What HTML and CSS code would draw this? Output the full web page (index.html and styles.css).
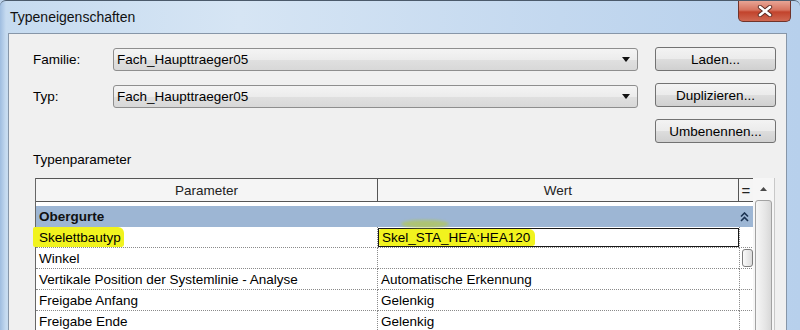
FILE: index.html
```html
<!DOCTYPE html>
<html lang="de">

<head>
    <meta charset="UTF-8">
    <meta name="viewport" content="width=device-width, initial-scale=1.0">
    <link rel="stylesheet" href="styles.css">
</head>

<body>
    <div class="window">
        <div class="titlebar">
            <span class="title">Typeneigenschaften</span>
            <div class="close">
                <svg width="16" height="12" viewBox="0 0 16 12">
                    <path d="M3 2 L13 10 M13 2 L3 10" stroke="#5a2a22" stroke-width="4.4" stroke-linecap="round" />
                    <path d="M3 2 L13 10 M13 2 L3 10" stroke="#fff" stroke-width="2.6" stroke-linecap="round" />
                </svg>
            </div>
        </div>

        <div class="client">
            <div class="top">
                <div class="fields">
                    <div class="field">
                        <label>Familie:</label>
                        <div class="combo">
                            <span>Fach_Haupttraeger05</span>
                            <svg width="8" height="5" viewBox="0 0 8 5"><path d="M0 0 H8 L4 5 Z" fill="#111" /></svg>
                        </div>
                    </div>
                    <div class="field">
                        <label>Typ:</label>
                        <div class="combo">
                            <span>Fach_Haupttraeger05</span>
                            <svg width="8" height="5" viewBox="0 0 8 5"><path d="M0 0 H8 L4 5 Z" fill="#111" /></svg>
                        </div>
                    </div>
                </div>
                <div class="buttons">
                    <div class="btn">Laden...</div>
                    <div class="btn">Duplizieren...</div>
                    <div class="btn">Umbenennen...</div>
                </div>
            </div>

            <div class="section-label">Typenparameter</div>

            <div class="table">
                <div class="grid">
                    <div class="head">Parameter</div>
                    <div class="head">Wert</div>
                    <div class="head eq">=</div>

                    <div class="group">
                        <span>Obergurte</span>
                        <svg width="9" height="10" viewBox="0 0 9 10">
                            <path d="M1 4.5 L4.5 1 L8 4.5 M1 9 L4.5 5.5 L8 9" fill="none" stroke="#1c3352" stroke-width="1.6" />
                        </svg>
                    </div>

                    <div class="cell name"><span class="marker">Skelettbautyp</span></div>
                    <div class="cell value edit-cell">
                        <div class="edit"><span class="marker smudge">Skel_STA_HEA:HEA120</span></div>
                    </div>
                    <div class="cell eq"></div>

                    <div class="cell name">Winkel</div>
                    <div class="cell value"></div>
                    <div class="cell eq"><div class="mini"></div></div>

                    <div class="cell name">Vertikale Position der Systemlinie - Analyse</div>
                    <div class="cell value">Automatische Erkennung</div>
                    <div class="cell eq"></div>

                    <div class="cell name">Freigabe Anfang</div>
                    <div class="cell value">Gelenkig</div>
                    <div class="cell eq"></div>

                    <div class="cell name">Freigabe Ende</div>
                    <div class="cell value">Gelenkig</div>
                    <div class="cell eq"></div>
                </div>
                <div class="scrollbar">
                    <div class="arrow">
                        <svg width="7" height="4" viewBox="0 0 7 4"><path d="M0 4 L3.5 0 L7 4 Z" fill="#4a4a4a" /></svg>
                    </div>
                    <div class="thumb"></div>
                </div>
            </div>
        </div>
    </div>
</body>

</html>
```

FILE: styles.css
```css
* {
    box-sizing: border-box;
}

body {
    margin: 0;
    width: 800px;
    height: 330px;
    overflow: hidden;
    font-family: "Liberation Sans", Arial, sans-serif;
    font-size: 13.5px;
    color: #000;
    background: #bcd3ec;
}

.window {
    height: 330px;
    display: flex;
    flex-direction: column;
    background: linear-gradient(to right, #9fbde0 0px, #c6dbf0 6px, #d6e5f4 30%, #c3d8ef 70%, #b7d0ec);
    border-top: 1px solid #4b5a6b;
    border-radius: 6px 6px 0 0;
}

.titlebar {
    flex-shrink: 0;
    height: 32px;
    display: flex;
    align-items: flex-start;
    padding-left: 10px;
}

.title {
    margin-top: 8px;
    font-size: 14px;
    color: #111;
}

.close {
    margin-left: auto;
    margin-right: 9px;
    width: 53px;
    height: 21px;
    border: 1px solid #70332a;
    border-top: none;
    border-radius: 0 0 5px 5px;
    background: linear-gradient(#e8a595, #d6735f 45%, #c2432c 55%, #cf6852);
    display: flex;
    align-items: center;
    justify-content: center;
}

.client {
    flex: 1;
    min-height: 0;
    margin: 0 13px 0 8px;
    background: #f0f0f0;
    border: 1px solid #8796a8;
    border-bottom: none;
    padding: 13px 10px 0 24px;
}

.top {
    display: flex;
    gap: 17px;
}

.fields {
    display: flex;
    flex-direction: column;
    gap: 13px;
    width: 605px;
}

.field {
    display: flex;
    align-items: center;
    height: 24px;
}

.field label {
    width: 80px;
}

.combo {
    flex: 1;
    height: 23px;
    border: 1px solid #8e8e8e;
    border-radius: 3px;
    background: linear-gradient(#f4f4f4, #ececec 50%, #e0e0e0 51%, #d8d8d8);
    display: flex;
    align-items: center;
    padding: 0 7px 0 3px;
}

.combo span {
    flex: 1;
}

.buttons {
    display: flex;
    flex-direction: column;
    gap: 12px;
    width: 121px;
}

.btn {
    height: 24px;
    border: 1px solid #727272;
    border-radius: 3px;
    background: linear-gradient(#f3f3f3, #ebebeb 50%, #dddddd 51%, #d0d0d0);
    display: flex;
    align-items: center;
    justify-content: center;
}

.section-label {
    margin-top: 9px;
    height: 16px;
    line-height: 16px;
}

.table {
    margin: 10px 0 0 2px;
    display: flex;
    width: 740px;
    height: 200px;
}

.grid {
    width: 718px;
    display: grid;
    grid-template-columns: 342px 361px 15px;
    grid-auto-rows: min-content;
    align-content: start;
    border-left: 1px solid #666;
    background: #fff;
}

.head {
    height: 24px;
    background: #f5f5f5;
    border-top: 1px solid #555;
    border-bottom: 1px solid #555;
    border-right: 1px solid #555;
    display: flex;
    align-items: center;
    justify-content: center;
    color: #222;
}

.head.eq {
    font-size: 15px;
}

.group {
    grid-column: 1 / -1;
    margin-top: 4px;
    height: 21px;
    background: #9db6d4;
    font-weight: bold;
    display: flex;
    align-items: center;
    padding: 0 5px 0 3px;
    color: #111;
}

.group svg {
    margin-left: auto;
}

.cell {
    height: 21px;
    border-bottom: 1px dotted #8a8a8a;
    display: flex;
    align-items: center;
    padding-left: 3px;
    white-space: nowrap;
}

.cell.name {
    border-right: 1px dotted #8a8a8a;
}

.cell.eq {
    border-left: 1px dotted #8a8a8a;
    border-right: 1px dotted #8a8a8a;
    padding-left: 2px;
}

.edit-cell {
    padding-left: 0;
    align-items: flex-start;
}

.edit {
    margin-top: 1px;
    width: 100%;
    height: 19px;
    border: 1px solid #1a1a1a;
    display: flex;
    align-items: center;
}

.marker {
    background: #f1f31e;
    margin-left: -6px;
    padding: 0 3px 0 6px;
    height: 20px;
    display: flex;
    align-items: center;
    border-radius: 2px 6px 3px 2px;
}

.edit .marker {
    margin-left: 0;
    padding: 0 5px 0 3px;
    height: 17px;
}

.smudge {
    position: relative;
}

.smudge::before {
    content: "";
    position: absolute;
    left: 22px;
    top: -9px;
    width: 48px;
    height: 8px;
    border-radius: 50%;
    background: #b5c94a;
    filter: blur(1.5px);
    opacity: 0.7;
}

.mini {
    width: 11px;
    height: 18px;
    border: 1px solid #7c7c7c;
    border-radius: 3px;
    background: linear-gradient(to right, #fafafa, #dcdcdc);
}

.scrollbar {
    width: 22px;
    background: #f6f6f6;
    border-right: 1px solid #c8c8c8;
    display: flex;
    flex-direction: column;
    align-items: center;
}

.arrow {
    height: 22px;
    display: flex;
    align-items: center;
    justify-content: center;
}

.thumb {
    width: 17px;
    flex: 1;
    border: 1px solid #a2a2a2;
    border-radius: 3px;
    background: linear-gradient(to right, #f6f6f6, #e6e6e6 60%, #d8d8d8);
}
```
